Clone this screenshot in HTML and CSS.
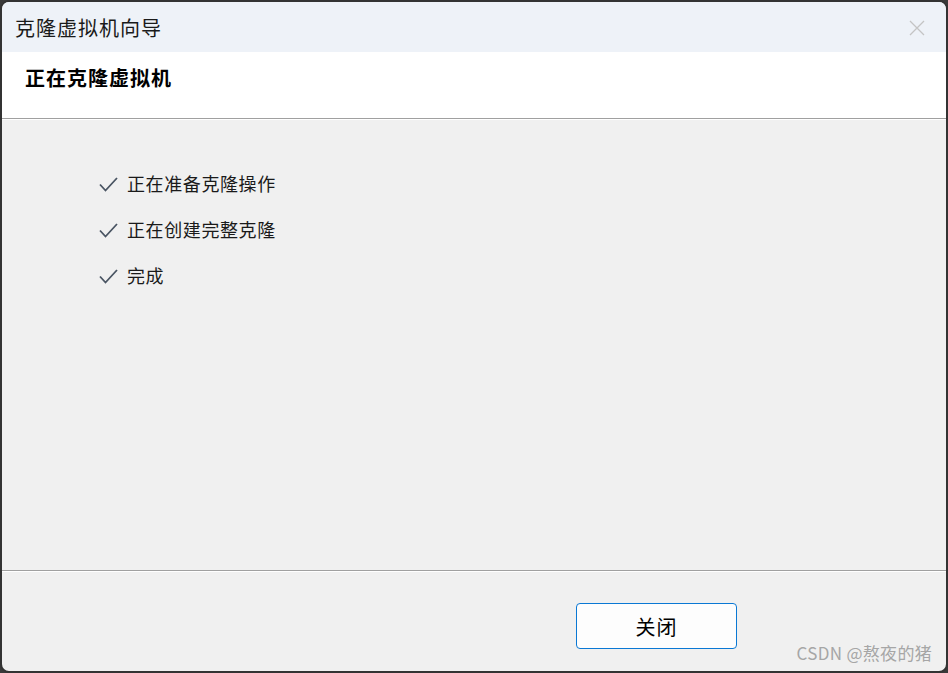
FILE: index.html
```html
<!DOCTYPE html>
<html lang="zh-CN">

<head>
    <meta charset="UTF-8">
    <title>克隆虚拟机向导</title>
    <link rel="stylesheet" href="styles.css">
</head>

<body>
    <div class="window">
        <!-- title bar -->
        <div class="titlebar">
            <span class="title">克隆虚拟机向导</span>
            <svg class="close" width="16" height="16" viewBox="0 0 16 16">
                <path d="M1 1 L15 15 M15 1 L1 15" stroke="#c4c4c4" stroke-width="1.3" fill="none" />
            </svg>
        </div>

        <div class="header">
            <h1>正在克隆虚拟机</h1>
        </div>
        <div class="sep"></div>

        <div class="content">
            <ul class="steps">
                <li><svg class="check" width="19" height="15" viewBox="0 0 19 15"><path d="M1 7.5 L6.5 13.5 L18 1" stroke="#4a5563" stroke-width="1.8" fill="none" /></svg>正在准备克隆操作</li>
                <li><svg class="check" width="19" height="15" viewBox="0 0 19 15"><path d="M1 7.5 L6.5 13.5 L18 1" stroke="#4a5563" stroke-width="1.8" fill="none" /></svg>正在创建完整克隆</li>
                <li><svg class="check" width="19" height="15" viewBox="0 0 19 15"><path d="M1 7.5 L6.5 13.5 L18 1" stroke="#4a5563" stroke-width="1.8" fill="none" /></svg>完成</li>
            </ul>
        </div>

        <div class="sep"></div>
        <div class="footer">
            <button class="btn">关闭</button>
        </div>

        <span class="watermark">CSDN @熬夜的猪</span>
    </div>
</body>

</html>
```

FILE: styles.css
```css
/* page */
html,
body {
    margin: 0;
    height: 100%;
    background: #3a3a3a;
}

body {
    font-family: "Noto Sans CJK SC", "Noto Sans", sans-serif;
}

/* dialog window */
.window {
    position: relative;
    box-sizing: border-box;
    height: 100%;
    display: flex;
    flex-direction: column;
    background: #f0f0f0;
    border: 2px solid #333333;
    border-radius: 9px;
    overflow: hidden;
}

.titlebar {
    height: 50px;
    flex: none;
    display: flex;
    align-items: center;
    justify-content: space-between;
    padding: 0 21px 0 13px;
    background: #eef2f8;
}

.title {
    font-size: 20px;
    color: #1a1a1a;
    letter-spacing: 1px;
}

.close {
    margin-top: 2px;
}

.header {
    height: 66px;
    flex: none;
    display: flex;
    align-items: center;
    padding-left: 23px;
    background: #ffffff;
}

.header h1 {
    margin: 0 0 15px 0;
    font-size: 20px;
    font-weight: bold;
    color: #000000;
    letter-spacing: 1px;
}

/* etched separator */
.sep {
    flex: none;
    height: 1px;
    background: #a0a0a0;
    border-bottom: 1px solid #ffffff;
}

.content {
    flex: 1;
    padding: 40px 0 0 97px;
}

.steps {
    list-style: none;
    margin: 0;
    padding: 0;
}

.steps li {
    display: flex;
    align-items: center;
    height: 46px;
    font-size: 18px;
    color: #1a1a1a;
    letter-spacing: 0.6px;
}

.check {
    margin: 3px 9px 0 0;
}

.footer {
    height: 99px;
    flex: none;
    padding: 31px 0 0 574px;
    box-sizing: border-box;
}

.btn {
    width: 161px;
    height: 46px;
    background: #fdfdfd;
    border: 1px solid #0a78d4;
    border-radius: 4px;
    font-family: "Noto Sans CJK SC", sans-serif;
    font-size: 20px;
    color: #000000;
    letter-spacing: 1px;
}

.watermark {
    position: absolute;
    right: 14px;
    bottom: 6px;
    font-size: 17px;
    letter-spacing: 0.3px;
    color: #a6a6a6;
    font-family: "Noto Sans CJK SC", sans-serif;
}
```
